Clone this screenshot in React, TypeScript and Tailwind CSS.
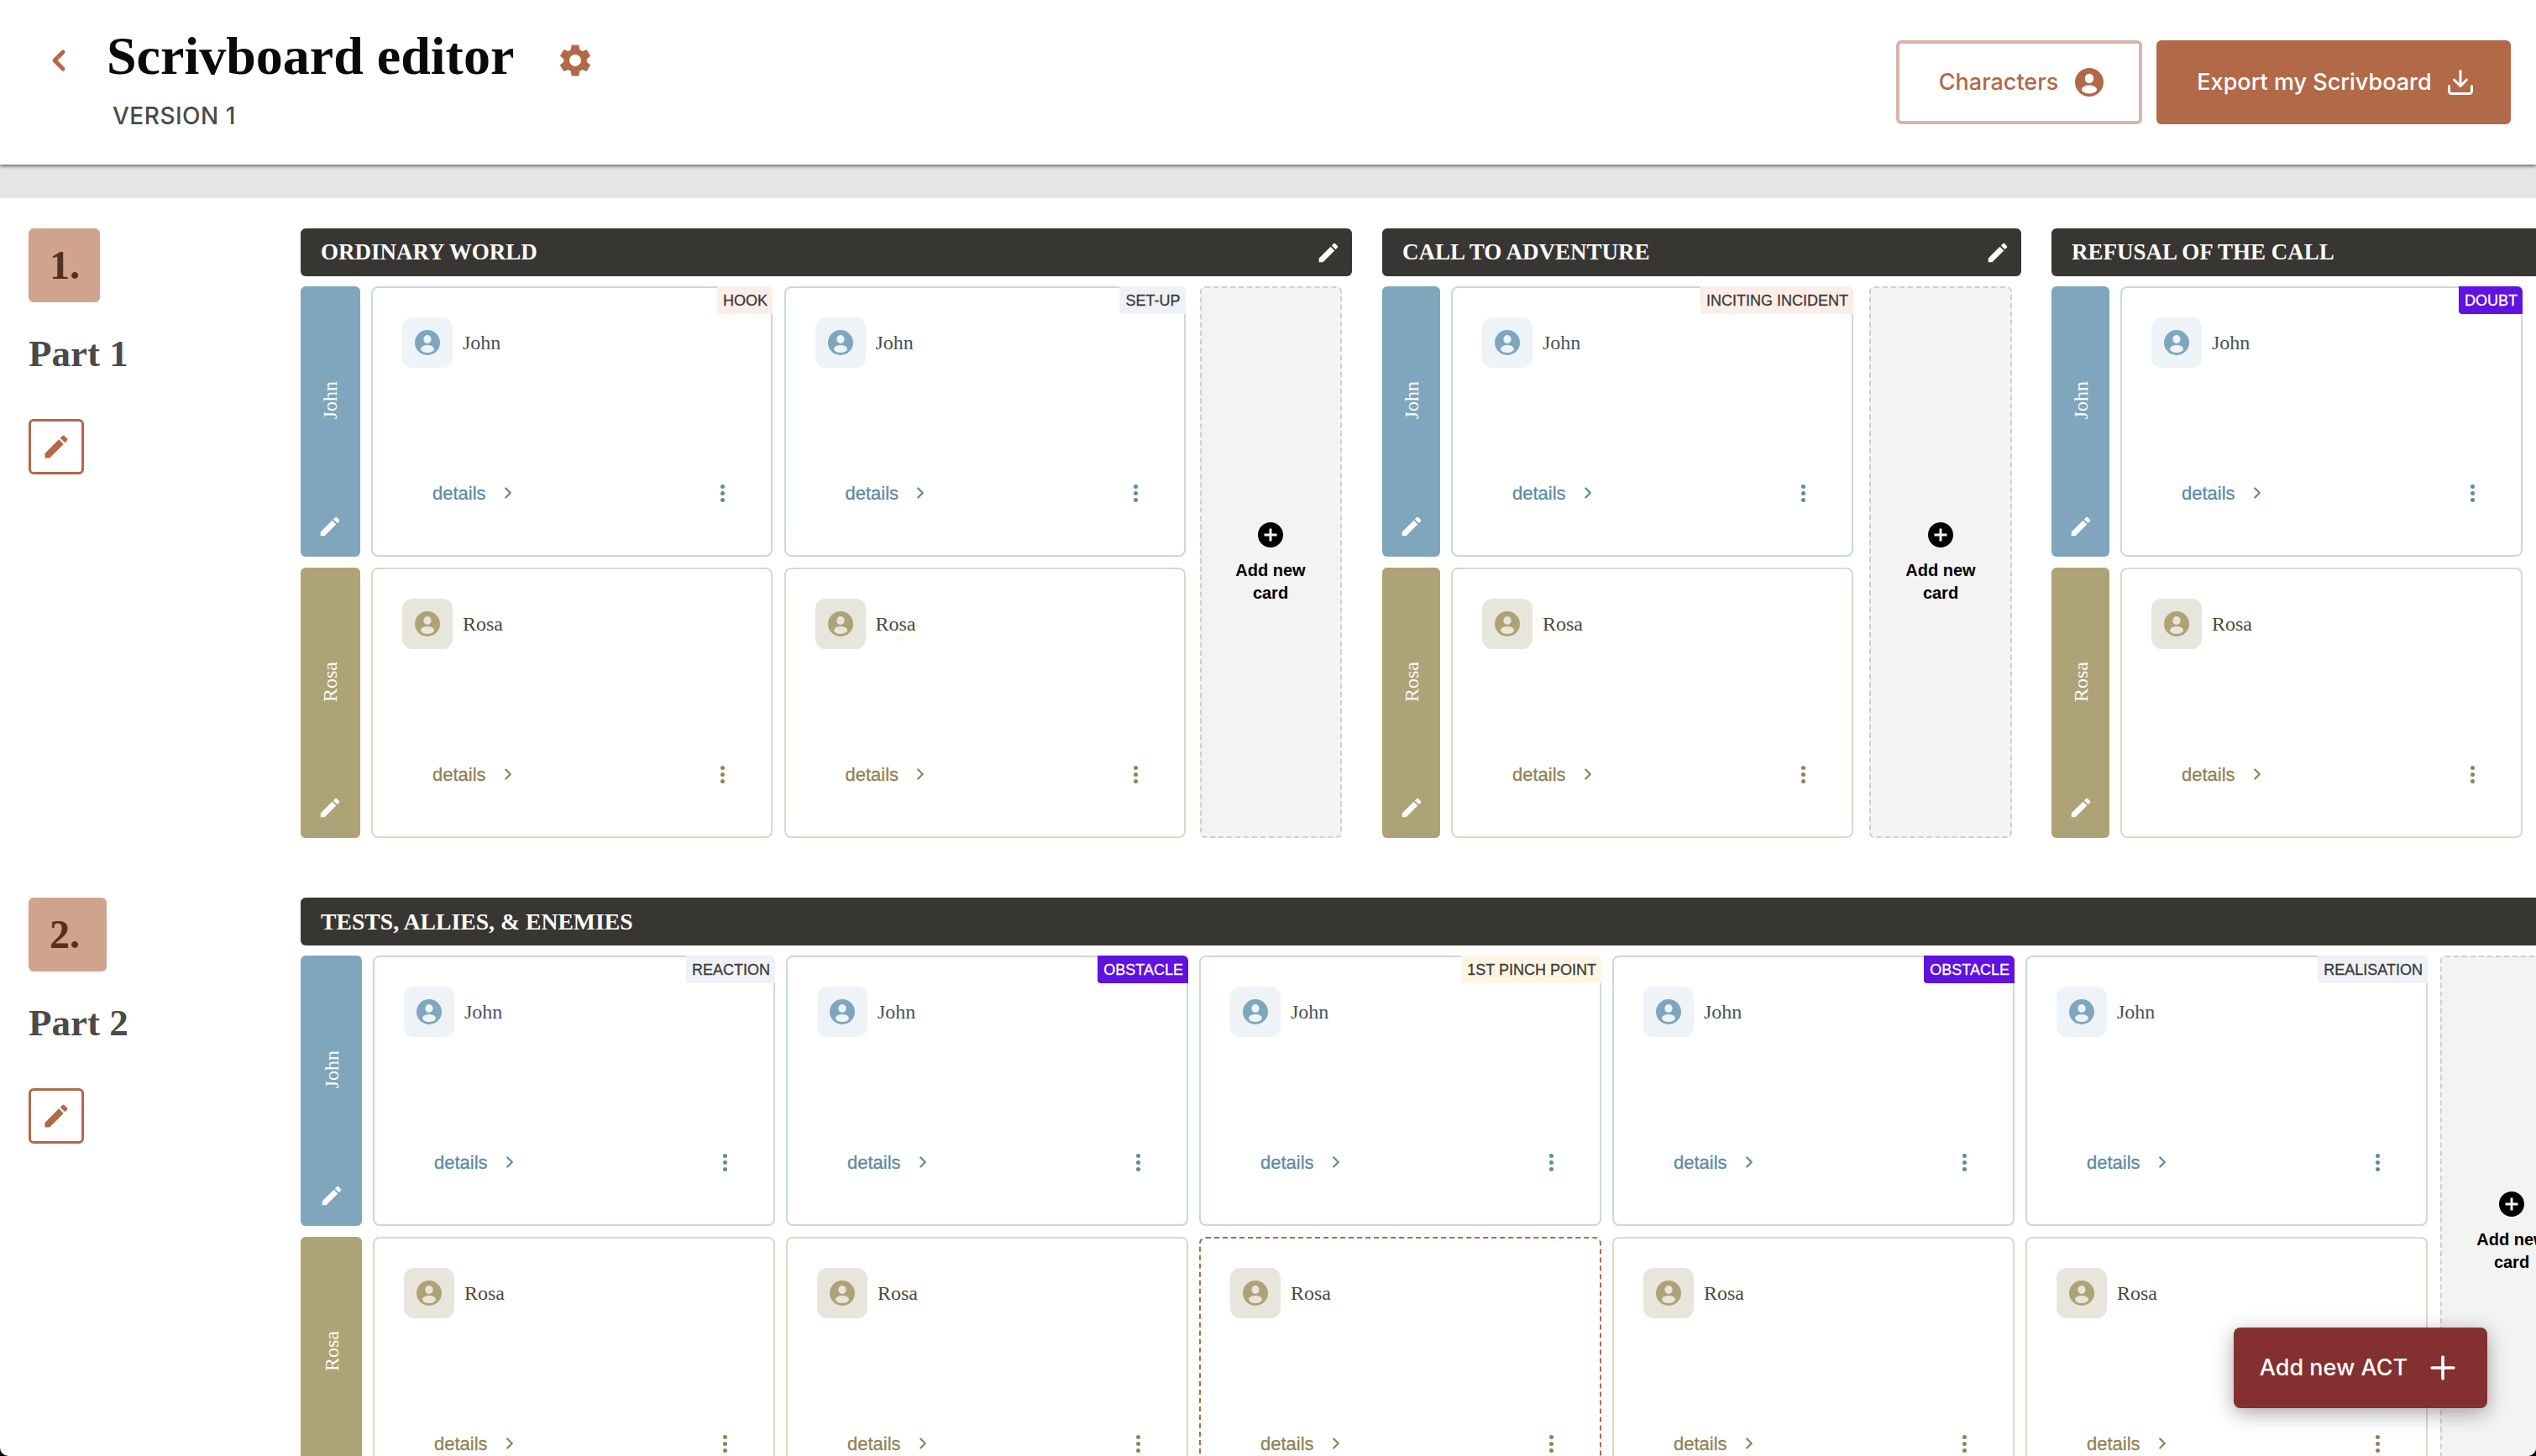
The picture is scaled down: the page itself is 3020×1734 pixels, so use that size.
import React from "react";
import { ChevronLeft, ChevronRight, Download, Plus } from "lucide-react";
import { MdAddCircle, MdEdit, MdSettings } from "react-icons/md";

const SERIF = "font-['Liberation_Serif',serif]";
const SANS = "font-['Inter',sans-serif]";
const ARIAL = "font-['Liberation_Sans',sans-serif] [-webkit-text-stroke:0.3px_currentColor]";

const LANES = {
  John: {
    tab: "bg-[#7fa6bc]",
    border: "border-[#c9d8e0]",
    soft: "bg-[#edf3f6]",
    fill: "#7fa6bc",
    name: "text-[#46535a]",
    link: "text-[#5d8ba5]",
  },
  Rosa: {
    tab: "bg-[#aea277]",
    border: "border-[#dcd8c8]",
    soft: "bg-[#e8e6dc]",
    fill: "#aea277",
    name: "text-[#4d4a3c]",
    link: "text-[#918353]",
  },
};

type LaneName = keyof typeof LANES;

const TAG_STYLES: Record<string, string> = {
  HOOK: "bg-[#fbeee9] text-[#3a3a38]",
  "SET-UP": "bg-[#eef1f6] text-[#3a3a38]",
  "INCITING INCIDENT": "bg-[#fbeee9] text-[#3a3a38]",
  DOUBT: "bg-[#5f12e0] text-white",
  REACTION: "bg-[#eef1f6] text-[#3a3a38]",
  OBSTACLE: "bg-[#5f12e0] text-white",
  "1ST PINCH POINT": "bg-[#fdf6e3] text-[#3a3a38]",
  REALISATION: "bg-[#eef1f6] text-[#3a3a38]",
};

const UserIcon = ({ fill, hole, className }: { fill: string; hole: string; className: string }) => (
  <svg viewBox="0 0 30 30" className={className}>
    <circle cx="15" cy="15" r="15" fill={fill} />
    <ellipse cx="15" cy="11" rx="4.6" ry="5" fill={hole} />
    <ellipse cx="15" cy="22.5" rx="8" ry="4.5" fill={hole} />
  </svg>
);

const Dots = () => (
  <div className="flex flex-col gap-[3px]">
    <span className="w-[5px] h-[5px] rounded-full bg-current" />
    <span className="w-[5px] h-[5px] rounded-full bg-current" />
    <span className="w-[5px] h-[5px] rounded-full bg-current" />
  </div>
);

const Card = ({
  lane,
  tag,
  dashed,
  width,
}: {
  lane: LaneName;
  tag?: string;
  dashed?: boolean;
  width: string;
}) => {
  const c = LANES[lane];
  return (
    <div
      className={`relative shrink-0 ${width} h-[322px] bg-white rounded-[8px] border-2 flex flex-col ${
        dashed ? "border-dashed border-[#b16948]" : c.border
      }`}
    >
      {tag && (
        <span
          className={`absolute -top-[2px] -right-[2px] h-[33px] pl-[7px] pr-[6px] flex items-center rounded-bl-[4px] rounded-tr-[6px] text-[18px] leading-none whitespace-nowrap ${ARIAL} ${TAG_STYLES[tag]}`}
        >
          {tag}
        </span>
      )}
      <div className="flex items-center gap-[12px] pl-[35px] pt-[35px]">
        <div className={`w-[60px] h-[60px] rounded-[12px] flex items-center justify-center ${c.soft}`}>
          <UserIcon fill={c.fill} hole={lane === "John" ? "#edf3f6" : "#e8e6dc"} className="w-[30px] h-[30px]" />
        </div>
        <span className={`${SERIF} text-[24px] ${c.name}`}>{lane}</span>
      </div>
      <div className={`mt-auto mb-[59px] ml-[71px] mr-[55px] h-[30px] flex items-center justify-between ${c.link}`}>
        <div className="flex items-center gap-[15px]">
          <span className={`${ARIAL} text-[22px]`}>details</span>
          <ChevronRight size={22} strokeWidth={2.5} />
        </div>
        <Dots />
      </div>
    </div>
  );
};

const Tab = ({ lane, width }: { lane: LaneName; width: string }) => (
  <div className={`shrink-0 ${width} h-[322px] rounded-[6px] flex flex-col items-center text-white ${LANES[lane].tab}`}>
    <div className="flex-1 flex items-center justify-center">
      <span className={`${SERIF} text-[24px] [writing-mode:vertical-rl] rotate-180`}>{lane}</span>
    </div>
    <MdEdit size={30} className="mb-[21px]" />
  </div>
);

const AddCard = ({ width, margin }: { width: string; margin: string }) => (
  <div
    className={`shrink-0 ${width} ${margin} h-[657px] rounded-[6px] bg-[#f3f3f2] border-2 border-dashed border-[#cfcfcd] flex flex-col items-center justify-center gap-[11px]`}
  >
    <MdAddCircle size={36} className="text-black" />
    <span className="font-['Liberation_Sans',sans-serif] font-bold text-[20px] leading-[27px] text-center w-[90px] text-black">
      Add new card
    </span>
  </div>
);

const Section = ({
  title,
  titleSize,
  edit,
  width,
  tabWidth,
  cardWidth,
  gap,
  addMargin,
  addWidth,
  tags,
  dashed,
}: {
  title: string;
  titleSize: string;
  edit?: boolean;
  width: string;
  tabWidth: string;
  cardWidth: string;
  gap: string;
  addMargin?: string;
  addWidth?: string;
  tags: string[];
  dashed?: number;
}) => (
  <section className={`shrink-0 ${width}`}>
    <div className="h-[57px] rounded-[6px] bg-[#383633] text-white flex items-center justify-between pl-[24px] pr-[13px]">
      <h2 className={`${SERIF} font-bold ${titleSize} leading-none`}>{title}</h2>
      {edit && <MdEdit size={30} />}
    </div>
    <div className="flex mt-[12px]">
      <div className="flex flex-col gap-[13px]">
        {(["John", "Rosa"] as LaneName[]).map((lane) => (
          <div key={lane} className={`flex ${gap}`}>
            <Tab lane={lane} width={tabWidth} />
            {tags.map((tag, i) => (
              <Card
                key={i}
                lane={lane}
                tag={lane === "John" ? tag : undefined}
                dashed={lane === "Rosa" && dashed === i}
                width={cardWidth}
              />
            ))}
          </div>
        ))}
      </div>
      {addWidth && addMargin && <AddCard width={addWidth} margin={addMargin} />}
    </div>
  </section>
);

const ActHeading = ({ n, badge }: { n: number; badge: string }) => (
  <div className="shrink-0 w-[358px] pl-[34px]">
    <div className={`${badge} h-[88px] rounded-[6px] bg-[#d0a38e] flex items-center pl-[25px] ${SERIF} font-bold text-[48px] text-[#55301c]`}>
      {n}.
    </div>
    <p className={`${SERIF} font-bold text-[45px] leading-none text-[#4a4a4a] mt-[39px]`}>Part {n}</p>
    <button className="mt-[55px] w-[66px] h-[66px] rounded-[6px] border-[3px] border-[#b16948] flex items-center justify-center text-[#b16948]">
      <MdEdit size={36} />
    </button>
  </div>
);

export default function App() {
  return (
    <div className="w-screen h-screen bg-black">
      <div className="relative w-full h-full overflow-hidden bg-white rounded-b-[10px]">
        <header className="relative z-10 h-[196px] bg-white shadow-[0_2px_4px_rgba(0,0,0,0.55)] flex items-start justify-between pl-[50px] pr-[30px]">
          <div className="flex items-start">
            <ChevronLeft size={40} strokeWidth={3} className="text-[#b16948] mt-[52px]" />
            <div className="ml-[37px] mt-[30px]">
              <h1 className={`${SERIF} font-bold text-[64px] leading-[74px] text-[#0a0a0a]`}>Scrivboard editor</h1>
              <p className={`${SANS} font-medium text-[28px] leading-none tracking-[0.5px] text-[#4a4a4a] ml-[7px] mt-[20px]`}>
                VERSION 1
              </p>
            </div>
            <MdSettings size={46} className="text-[#b16948] ml-[50px] mt-[49px]" />
          </div>
          <div className={`flex gap-[17px] mt-[48px] ${SANS} font-medium text-[27px]`}>
            <button className="w-[293px] h-[100px] pl-[5px] rounded-[6px] border-4 border-[#d8b5a8] text-[#b16948] flex items-center justify-center gap-[20px]">
              Characters
              <UserIcon fill="#b16948" hole="#ffffff" className="w-[34px] h-[34px]" />
            </button>
            <button className="w-[422px] h-[100px] pl-[6px] rounded-[6px] bg-[#b16948] text-white flex items-center justify-center gap-[16px]">
              Export my Scrivboard
              <Download size={36} strokeWidth={2} />
            </button>
          </div>
        </header>
        <div className="h-[40px] bg-[#e5e5e3]" />
        <main className="pt-[36px] flex flex-col gap-[71px]">
          <div className="flex">
            <ActHeading n={1} badge="w-[85px]" />
            <div className="flex gap-[36px]">
              <Section
                title="ORDINARY WORLD"
                titleSize="text-[27px]"
                edit
                width="w-[1252px]"
                tabWidth="w-[70.5px]"
                cardWidth="w-[478px]"
                gap="gap-[13.5px]"
                addMargin="ml-[17px]"
                addWidth="w-[169px]"
                tags={["HOOK", "SET-UP"]}
              />
              <Section
                title="CALL TO ADVENTURE"
                titleSize="text-[27px]"
                edit
                width="w-[761px]"
                tabWidth="w-[69px]"
                cardWidth="w-[479px]"
                gap="gap-[13px]"
                addMargin="ml-[19px]"
                addWidth="w-[170px]"
                tags={["INCITING INCIDENT"]}
              />
              <Section
                title="REFUSAL OF THE CALL"
                titleSize="text-[27px]"
                width="w-[1252px]"
                tabWidth="w-[69px]"
                cardWidth="w-[479px]"
                gap="gap-[13px]"
                tags={["DOUBT"]}
              />
            </div>
          </div>
          <div className="flex">
            <ActHeading n={2} badge="w-[93px]" />
            <Section
              title="TESTS, ALLIES, & ENEMIES"
              titleSize="text-[27.7px]"
              width="w-[2740px]"
              tabWidth="w-[73px]"
              cardWidth="w-[479px]"
              gap="gap-[13px]"
              addMargin="ml-[15px]"
              addWidth="w-[170px]"
              tags={["REACTION", "OBSTACLE", "1ST PINCH POINT", "OBSTACLE", "REALISATION"]}
              dashed={2}
            />
          </div>
        </main>
        <button
          className={`absolute right-[58px] bottom-[57px] w-[302px] h-[96px] rounded-[8px] bg-[#843030] text-white flex items-center justify-center gap-[20px] shadow-[0_6px_24px_rgba(0,0,0,0.35)] ${SANS} font-medium text-[27px]`}
        >
          Add new ACT
          <Plus size={44} strokeWidth={2} />
        </button>
      </div>
    </div>
  );
}
